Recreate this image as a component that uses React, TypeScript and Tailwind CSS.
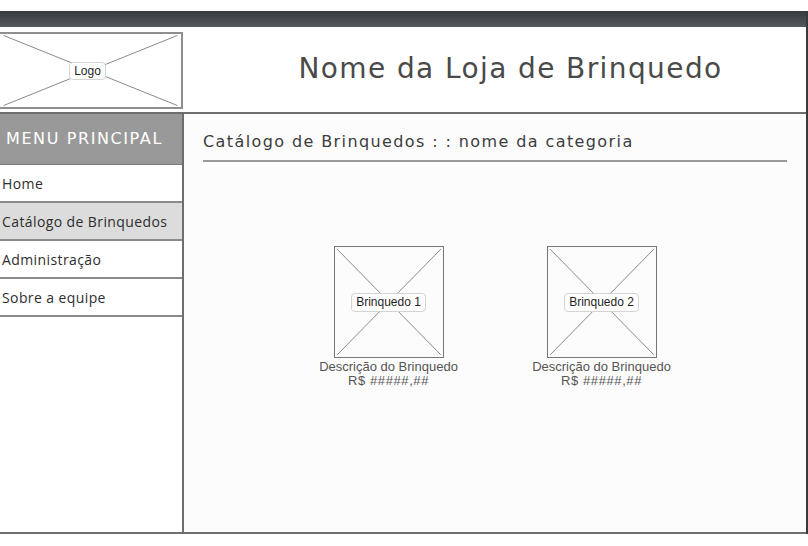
import React from "react";

const sans = "font-['Open_Sans',sans-serif]";
const wide = "font-['DejaVu_Sans',sans-serif]";

function Placeholder({ label, small }: { label: string; small?: boolean }) {
  return (
    <div className="relative h-full w-full">
      <svg className="absolute inset-0 h-full w-full" preserveAspectRatio="none" viewBox="0 0 100 100">
        <line x1="2" y1="2" x2="98" y2="98" stroke="#8a8a8a" strokeWidth="1" vectorEffect="non-scaling-stroke" />
        <line x1="98" y1="2" x2="2" y2="98" stroke="#8a8a8a" strokeWidth="1" vectorEffect="non-scaling-stroke" />
      </svg>
      <div className={`absolute inset-0 flex items-center justify-center ${small ? "pr-[6px]" : ""}`}>
        <span
          className={`rounded-[4px] border border-[#d4d4d4] bg-white font-['Liberation_Sans',sans-serif] text-[#1f1f1f] ${
            small ? "px-[4px] text-[12px] leading-[16px]" : "px-[4px] text-[12px] leading-[17px]"
          }`}
        >
          {label}
        </span>
      </div>
    </div>
  );
}

const menu = ["Home", "Catálogo de Brinquedos", "Administração", "Sobre a equipe"];

function Product({ name }: { name: string }) {
  return (
    <div className="flex w-[150px] flex-col items-center">
      <div className="h-[112px] w-[110px] border border-[#777]">
        <Placeholder label={name} />
      </div>
      <div className="mt-[2px] text-center font-['Liberation_Sans',sans-serif] text-[13px] leading-[14px] text-[#555]">
        <div>Descrição do Brinquedo</div>
        <div className="tracking-[0.6px]">R$ #####,##</div>
      </div>
    </div>
  );
}

export default function App() {
  return (
    <div className={`flex h-[546px] w-[808px] flex-col overflow-hidden bg-white pt-[11px] ${sans}`}>
      <div className="flex flex-1 flex-col border-r-2 border-[#3a3a3a]">
        <div className="h-[16px] bg-gradient-to-b from-[#383c3f] to-[#54595d]" />

        <div className="flex h-[87px] border-b-2 border-[#6e6e6e] pt-[5px]">
          <div className="h-[77px] w-[183px] border-y-2 border-r-2 border-[#8f8f8f] bg-white">
            <Placeholder label="Logo" small />
          </div>
          <div className={`flex flex-1 items-center justify-center pb-[6px] pl-[32px] text-[28px] tracking-[1.4px] text-[#4a4a4a] ${wide}`}>
            Nome da Loja de Brinquedo
          </div>
        </div>

        <div className="flex h-[420px] border-b-2 border-[#6e6e6e]">
          <div className="w-[184px] border-r-2 border-[#6e6e6e]">
            <div className={`flex h-[51px] items-center border-b border-[#7a7a7a] bg-[#999999] pl-[6px] text-[16px] tracking-[1.6px] text-white ${wide}`}>
              MENU PRINCIPAL
            </div>
            {menu.map((item, i) => (
              <div
                key={item}
                className={`flex h-[38px] items-center border-b-2 border-[#8a8a8a] pl-[2px] text-[14px] tracking-[0.4px] text-[#2e2e2e] ${
                  i === 1 ? "bg-[#dcdcdc]" : "bg-white"
                }`}
              >
                {item}
              </div>
            ))}
          </div>

          <div className="flex-1 bg-[#fcfcfc] px-[19px]">
            <div className={`flex h-[48px] items-end border-b-2 border-[#9a9a9a] pb-[6px] text-[16px] tracking-[1.4px] text-[#3c3c3c] ${wide}`}>
              Catálogo de Brinquedos : : nome da categoria
            </div>
            <div className="mt-[84px] flex justify-center gap-[63px]">
              <Product name="Brinquedo 1" />
              <Product name="Brinquedo 2" />
            </div>
          </div>
        </div>
      </div>
      <div className="h-[12px]" />
    </div>
  );
}
